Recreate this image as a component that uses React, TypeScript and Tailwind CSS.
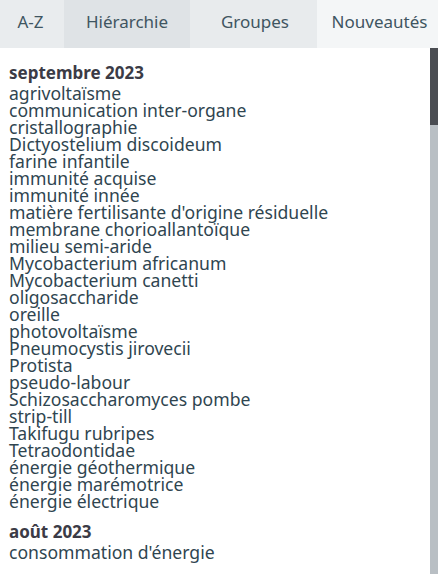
import React from 'react';

const groups: { title: string; items: string[] }[] = [
  {
    title: 'septembre 2023',
    items: [
      'agrivoltaïsme',
      'communication inter-organe',
      'cristallographie',
      'Dictyostelium discoideum',
      'farine infantile',
      'immunité acquise',
      'immunité innée',
      "matière fertilisante d'origine résiduelle",
      'membrane chorioallantoïque',
      'milieu semi-aride',
      'Mycobacterium africanum',
      'Mycobacterium canetti',
      'oligosaccharide',
      'oreille',
      'photovoltaïsme',
      'Pneumocystis jirovecii',
      'Protista',
      'pseudo-labour',
      'Schizosaccharomyces pombe',
      'strip-till',
      'Takifugu rubripes',
      'Tetraodontidae',
      'énergie géothermique',
      'énergie marémotrice',
      'énergie électrique',
    ],
  },
  {
    title: 'août 2023',
    items: ["consommation d'énergie"],
  },
];

const tabs = [
  { label: 'A-Z', cls: 'w-[64px] bg-[#e9ecee] pr-[3px]' },
  { label: 'Hiérarchie', cls: 'w-[126px] bg-[#dfe3e6]' },
  { label: 'Groupes', cls: 'w-[127px] bg-[#e8ebed] pl-[3px]' },
  { label: 'Nouveautés', cls: 'flex-1 bg-[#f4f6f7] pl-[4px]' },
];

export default function App() {
  return (
    <div className="w-[438px] h-[574px] flex flex-col bg-white overflow-hidden font-['Noto_Sans',sans-serif]">
      {/* Tabs */}
      <div className="h-12 flex shrink-0">
        {tabs.map((t) => (
          <div key={t.label} className={`${t.cls} flex items-center justify-center pb-[4px] text-[17px] text-[#3f5561]`}>
            {t.label}
          </div>
        ))}
      </div>

      {/* List + scrollbar */}
      <div className="flex-1 flex min-h-0">
        <div className="flex-1 pl-[9px] pt-[12px]">
          {groups.map((g, i) => (
            <div key={g.title} className={i > 0 ? 'mt-[9px]' : ''}>
              <div className="font-bold text-[17px] leading-[25px] text-[#3b3b46]">{g.title}</div>
              {g.items.map((it) => (
                <div key={it} className="text-[17.6px] leading-[17px] text-[#2f4550] whitespace-nowrap">
                  {it}
                </div>
              ))}
            </div>
          ))}
        </div>
        <div className="w-2 bg-[#b9bfc4] flex flex-col">
          <div className="h-[77px] bg-[#4a4d52]" />
        </div>
      </div>
    </div>
  );
}
